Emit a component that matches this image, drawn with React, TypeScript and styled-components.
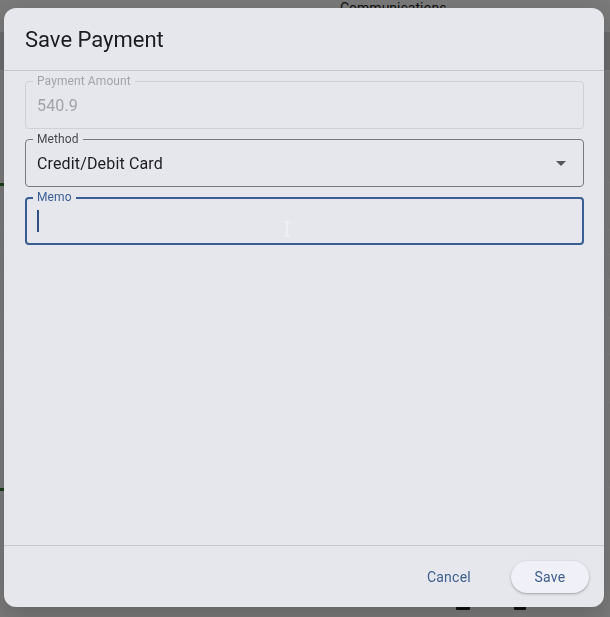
import React from "react";
import styled, { createGlobalStyle } from "styled-components";

const Global = createGlobalStyle`
  html, body { margin: 0; padding: 0; height: 100%; }
  body {
    background: #eeeeee;
    font-family: Roboto, "Noto Sans", Arial, sans-serif;
    overflow: hidden;
  }
`;

/* ---------- background page (behind the scrim) ---------- */
const Page = styled.div`
  height: 617px;
  display: flex;
  flex-direction: column;
  background: #f2f2f2;
`;

const TopBar = styled.div`
  height: 32px;
  border-bottom: 1px solid #fafafa;
  display: flex;
  align-items: flex-start;
  padding-left: 340px;
  font-size: 14px;
  color: #222;
  line-height: 16px;
  box-sizing: border-box;
`;

const SubBar = styled.div`
  height: 38px;
  background: #d8d8d8;
  border-bottom: 1px solid #fafafa;
`;

const Row = styled.div<{ $h: number }>`
  height: ${(p) => p.$h}px;
  border-bottom: 1px solid #fafafa;
  box-sizing: border-box;
`;

const GreenBar = styled.div`
  height: 3px;
  width: 200px;
  background: #2e7d32;
`;

const BottomIcons = styled.div`
  margin-top: auto;
  display: flex;
  gap: 44px;
  padding: 0 0 7px 456px;
  align-items: flex-end;
`;

const IconStub = styled.span<{ $w: number }>`
  width: ${(p) => p.$w}px;
  height: 4px;
  background: #222;
  border-radius: 1px;
`;

const Scrim = styled.div`
  position: fixed;
  inset: 0;
  background: rgba(0, 0, 0, 0.5);
  display: flex;
  align-items: flex-start;
  padding: 8px 0 0 4px;
`;

/* ---------- dialog ---------- */
const Dialog = styled.div`
  width: 600px;
  height: 599px;
  background: #e6e7ec;
  border-radius: 12px;
  display: flex;
  flex-direction: column;
  box-shadow: 0 8px 24px rgba(0, 0, 0, 0.18);
  overflow: hidden;
`;

const Header = styled.div`
  height: 63px;
  flex: none;
  box-sizing: border-box;
  padding: 1px 21px 0;
  display: flex;
  align-items: center;
  border-bottom: 1px solid #c4c6cc;
  font-size: 22px;
  color: #1b1c1f;
  font-weight: 400;
`;

const Content = styled.div`
  flex: 1;
  padding: 10px 20px 0 21px;
  display: flex;
  flex-direction: column;
  gap: 10px;
`;

const Field = styled.div<{ $border: string; $bw: number }>`
  position: relative;
  height: 48px;
  box-sizing: border-box;
  border: ${(p) => p.$bw}px solid ${(p) => p.$border};
  border-radius: 4px;
  display: flex;
  align-items: center;
  padding: 0 12px 0 ${(p) => 12 - p.$bw}px;
`;

const Label = styled.span<{ $color: string; $bw: number }>`
  position: absolute;
  top: ${(p) => -6 - p.$bw}px;
  left: ${(p) => 8 - p.$bw}px;
  padding: 0 4px;
  background: #e6e7ec;
  font-size: 12px;
  line-height: 12px;
  color: ${(p) => p.$color};
  letter-spacing: 0.1px;
`;

const Value = styled.span<{ $color: string }>`
  font-size: 16px;
  color: ${(p) => p.$color};
  flex: 1;
  letter-spacing: 0.15px;
`;

const Caret = styled.span`
  width: 2px;
  height: 22px;
  background: #2f4f80;
`;

const IBeam = styled.svg`
  position: absolute;
  left: 256px;
  top: 22px;
`;

const Footer = styled.div`
  height: 62px;
  flex: none;
  box-sizing: border-box;
  border-top: 1px solid #c4c6cc;
  display: flex;
  align-items: center;
  justify-content: flex-end;
  padding-right: 15px;
  gap: 28px;
`;

const TextButton = styled.button<{ $raised?: boolean }>`
  font-family: Roboto, Arial, sans-serif;
  font-size: 14px;
  font-weight: 400;
  letter-spacing: 0.25px;
  color: #3d5e8f;
  border: none;
  height: 32px;
  border-radius: 16px;
  padding: 0 ${(p) => (p.$raised ? 22 : 12)}px;
  width: ${(p) => (p.$raised ? "78px" : "auto")};
  background: ${(p) => (p.$raised ? "#f0f1f8" : "transparent")};
  box-shadow: ${(p) =>
    p.$raised ? "0 1px 3px rgba(0,0,0,0.25), 0 1px 1px rgba(0,0,0,0.08)" : "none"};
  cursor: pointer;
`;

export default function App() {
  return (
    <>
      <Global />
      <Page>
        <TopBar>Communications</TopBar>
        <SubBar />
        <Row $h={112} />
        <GreenBar />
        <Row $h={44} />
        <Row $h={25} />
        <Row $h={25} />
        <Row $h={38} />
        <Row $h={37} />
        <Row $h={48} />
        <Row $h={85} />
        <GreenBar />
        <BottomIcons>
          <IconStub $w={14} />
          <IconStub $w={12} />
        </BottomIcons>
      </Page>
      <Scrim>
        <Dialog>
          <Header>Save Payment</Header>
          <Content>
            <Field $border="#cfd0d6" $bw={1}>
              <Label $color="#a3a4aa" $bw={1}>Payment Amount</Label>
              <Value $color="#a2a3a8">540.9</Value>
            </Field>
            <Field $border="#78797e" $bw={1}>
              <Label $color="#47484d" $bw={1}>Method</Label>
              <Value $color="#1c1c20">Credit/Debit Card</Value>
              <svg width="24" height="24" viewBox="0 0 24 24" style={{ marginRight: -2 }}>
                <path d="M7 10l5 5 5-5z" fill="#55565b" />
              </svg>
            </Field>
            <Field $border="#3a5e94" $bw={2}>
              <Label $color="#3a5e94" $bw={2}>Memo</Label>
              <Caret />
              <IBeam width="8" height="16" viewBox="0 0 8 16">
                <path
                  d="M1 1h6M4 1v14M1 15h6"
                  stroke="#f4f4f6"
                  strokeWidth="1.2"
                  fill="none"
                />
              </IBeam>
            </Field>
          </Content>
          <Footer>
            <TextButton>Cancel</TextButton>
            <TextButton $raised>Save</TextButton>
          </Footer>
        </Dialog>
      </Scrim>
    </>
  );
}
